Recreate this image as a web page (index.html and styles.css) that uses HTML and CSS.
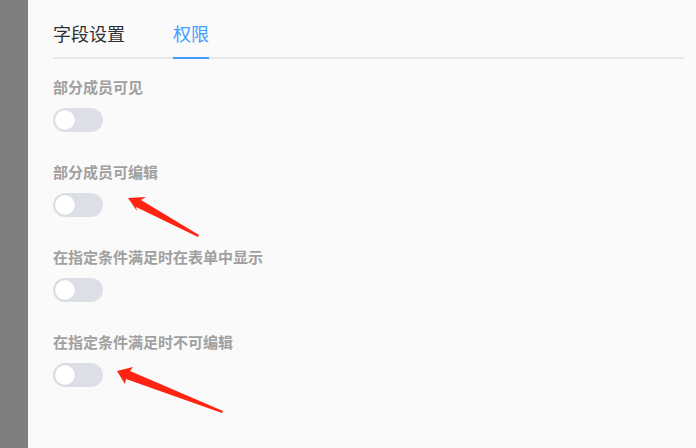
FILE: index.html
```html
<!DOCTYPE html>
<html lang="zh">
<head>
<meta charset="utf-8">
<link rel="stylesheet" href="styles.css">
</head>
<body>
<div class="page">
  <div class="side"></div>
  <div class="panel">
    <div class="tabs">
      <div class="tab">字段设置</div>
      <div class="tab active">权限</div>
    </div>
    <div class="items">
      <div class="item">
        <div class="label">部分成员可见</div>
        <div class="switch"><span class="knob"></span></div>
      </div>
      <div class="item">
        <div class="label">部分成员可编辑</div>
        <div class="switch"><span class="knob"></span></div>
      </div>
      <div class="item">
        <div class="label">在指定条件满足时在表单中显示</div>
        <div class="switch"><span class="knob"></span></div>
      </div>
      <div class="item">
        <div class="label">在指定条件满足时不可编辑</div>
        <div class="switch"><span class="knob"></span></div>
      </div>
    </div>
  </div>
  <svg class="arrows" width="696" height="448" viewBox="0 0 696 448">
    <polygon points="128,198 146,197 141,200 199,235 198,237 136,207 137,211" fill="#ff2314"/>
    <polygon points="117,371 133,367 130,371 223,411 222,413 126,379 125,384" fill="#ff2314"/>
  </svg>
</div>
</body>
</html>
```

FILE: styles.css
```css
* { box-sizing: border-box; }
html, body { margin: 0; padding: 0; }
body {
  width: 696px;
  height: 448px;
  overflow: hidden;
  font-family: "Noto Sans CJK SC", "Noto Sans", sans-serif;
  background: #fafafa;
}
.page {
  position: relative;
  display: flex;
  width: 696px;
  height: 448px;
}
.side {
  width: 28px;
  flex: none;
  background: #7f7f7f;
}
.panel {
  flex: 1;
  background: #fafafa;
  padding: 13px 12px 0 25px;
}
.tabs {
  display: flex;
  border-bottom: 2px solid #e4e7ed;
}
.tab {
  height: 46px;
  line-height: 40px;
  font-size: 18px;
  color: #303133;
  border-bottom: 2px solid transparent;
  margin-bottom: -2px;
  margin-right: 48px;
}
.tab.active {
  color: #409eff;
  border-bottom-color: #409eff;
}
.items {
  padding-top: 18px;
}
.item {
  padding-bottom: 30px;
}
.label {
  font-size: 15px;
  line-height: 20px;
  font-weight: bold;
  color: #a0a0a0;
  margin-bottom: 11px;
}
.switch {
  width: 50px;
  height: 24px;
  border-radius: 12px;
  background: #dcdfe6;
  padding: 2px;
  display: flex;
}
.knob {
  width: 20px;
  height: 20px;
  border-radius: 50%;
  background: #fff;
  box-shadow: 0 0 1px rgba(0, 0, 0, 0.15);
}
.arrows {
  position: absolute;
  left: 0;
  top: 0;
  pointer-events: none;
}
```
